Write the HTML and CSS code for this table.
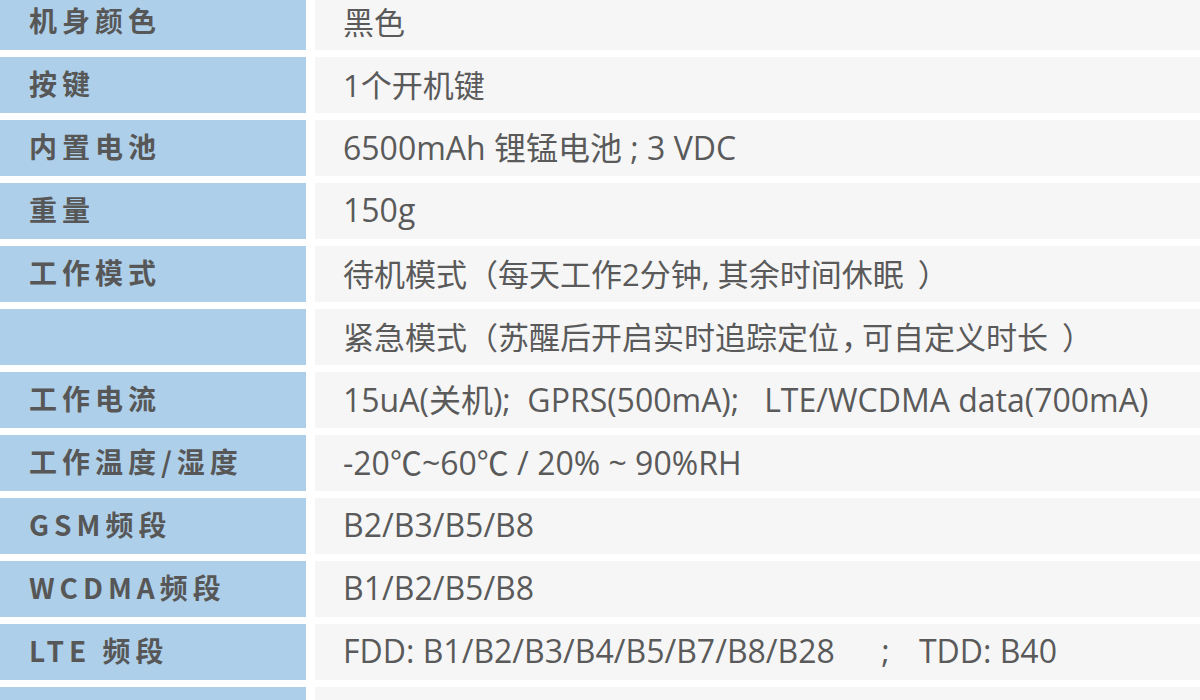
FILE: index.html
```html
<!DOCTYPE html>
<html lang="zh-CN">
<head>
<meta charset="utf-8">
<title>规格参数</title>
<link rel="stylesheet" href="styles.css">
</head>
<body>
<div class="spec">
  <div class="row"><div class="label">机身颜色</div><div class="value cjk">黑色</div></div>
  <div class="row"><div class="label">按键</div><div class="value cjk">1个开机键</div></div>
  <div class="row"><div class="label">内置电池</div><div class="value">6500mAh 锂锰电池 ; 3 VDC</div></div>
  <div class="row"><div class="label">重量</div><div class="value">150g</div></div>
  <div class="row"><div class="label">工作模式</div><div class="value cjk">待机模式（每天工作2分钟, 其余时间休眠<span class="rp">）</span></div></div>
  <div class="row"><div class="label"></div><div class="value cjk">紧急模式（苏醒后开启实时追踪定位<span class="cm">，</span>可自定义时长<span class="rp">）</span></div></div>
  <div class="row"><div class="label">工作电流</div><div class="value">15uA(关机);  GPRS(500mA);   LTE/WCDMA data(700mA)</div></div>
  <div class="row"><div class="label">工作温度/湿度</div><div class="value">-20℃~60℃ / 20% ~ 90%RH</div></div>
  <div class="row"><div class="label">GSM频段</div><div class="value">B2/B3/B5/B8</div></div>
  <div class="row"><div class="label">WCDMA频段</div><div class="value">B1/B2/B5/B8</div></div>
  <div class="row"><div class="label">LTE 频段</div><div class="value">FDD: B1/B2/B3/B4/B5/B7/B8/B28 <span class="sep">;</span> TDD: B40</div></div>
  <div class="row"><div class="label">防护等级</div><div class="value">IP67</div></div>
</div>
</body>
</html>
```
FILE: styles.css
```css
html, body {
  margin: 0;
  padding: 0;
  background: #ffffff;
  overflow: hidden;
}

.spec {
  display: flex;
  flex-direction: column;
  gap: 7px;
  margin-top: -6px;
  font-family: "Open Sans", "Noto Sans CJK SC", sans-serif;
  color: #5a5a5a;
}

.row {
  display: grid;
  grid-template-columns: 306px 1fr;
  column-gap: 9px;
  height: 56px;
}

.label {
  background: #aecfe9;
  display: flex;
  align-items: center;
  padding-left: 29px;
  padding-bottom: 4px;
  font-family: "Noto Sans CJK SC", sans-serif;
  font-weight: bold;
  font-size: 28px;
  letter-spacing: 5px;
  color: #575757;
}

.value {
  background: #f6f6f6;
  display: flex;
  align-items: center;
  padding-left: 28px;
  padding-bottom: 4px;
  font-size: 32px;
  white-space: pre;
}

.value.cjk {
  font-size: 31px;
}

.rp {
  margin-left: 14px;
}

.cm {
  margin-left: 2px;
  letter-spacing: -10px;
}

.sep {
  padding: 0 21px 0 38px;
}
```
